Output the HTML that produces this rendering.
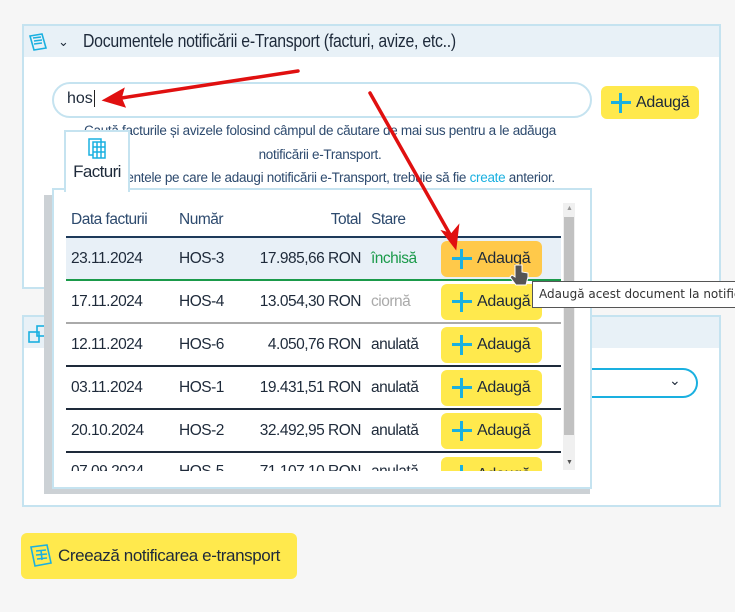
<!DOCTYPE html>
<html><head><meta charset="utf-8"><style>
body{margin:0;width:735px;height:612px;background:#f6f6f6;font-family:"Liberation Sans",sans-serif;color:#1e2a3a;position:relative;overflow:hidden;white-space:nowrap}
.a{position:absolute}
.panel{border:2px solid #c5e3f0;background:#fff}
.hdr{background:#e8f1f7}
.btn{background:#ffe94d;border-radius:6px;font-size:16px;letter-spacing:-0.3px;color:#1e2a3a;display:flex;align-items:center}
.plus{display:inline-block;position:relative;width:20px;height:20px;margin:0 5px 0 12px}
.plus:before,.plus:after{content:"";position:absolute;background:#1ab0e0}
.plus:before{left:8px;top:0;width:3px;height:20px}
.plus:after{left:0;top:8px;width:20px;height:3px}
.help{font-size:13.5px;letter-spacing:-0.3px;color:#2d4a6e;text-align:center}
table{table-layout:fixed}
td{padding:0;font-size:15.5px;letter-spacing:-0.5px;overflow:hidden}
</style></head><body>
<div class="a panel" style="left:22px;top:24px;width:695px;height:261px"></div>
<div class="a hdr" style="left:24px;top:26px;width:695px;height:31px"></div>
<svg class="a" style="left:27px;top:32px" width="24" height="20" viewBox="0 0 24 20"><g fill="none" stroke="#1ab0e0" stroke-width="1.6"><path d="M3 4l12-2 4 14-12 2z"/><path d="M6 6l8-1M7 9l8-1M7 12l8-1"/></g></svg>
<div class="a" style="left:58px;top:34px;font-size:13px">&#8964;</div>
<div class="a" style="left:83px;top:31px;font-size:18px;letter-spacing:-0.3px;transform:scaleX(0.88);transform-origin:0 0">Documentele notificării e-Transport (facturi, avize, etc..)</div>
<div class="a" style="left:52px;top:82px;width:536px;height:32px;border:2px solid #c5e3f0;border-radius:18px;background:#fff"></div>
<div class="a" style="left:67px;top:90px;font-size:16px">hos<span style="border-left:1px solid #222;margin-left:1px"></span></div>
<div class="a btn" style="left:601px;top:86px;width:98px;height:33px"><span class="plus" style="margin-left:10px"></span>Adaugă</div>
<div class="a help" style="left:40px;top:119px;width:560px;line-height:23.5px">Caută facturile și avizele folosind câmpul de căutare de mai sus pentru a le adăuga<br>notificării e-Transport.<br>Documentele pe care le adaugi notificării e-Transport, trebuie să fie <span style="color:#1ab0e0">create</span> anterior.</div>

<div class="a panel" style="left:22px;top:315px;width:695px;height:188px"></div>
<div class="a hdr" style="left:24px;top:317px;width:695px;height:31px"></div>
<svg class="a" style="left:28px;top:324px" width="22" height="20"><g fill="none" stroke="#1ab0e0" stroke-width="1.6"><rect x="1" y="8" width="10" height="10"/><rect x="9" y="2" width="10" height="10"/></g></svg>
<div class="a" style="left:540px;top:368px;width:156px;height:26px;border:2px solid #1ab0e0;border-left:none;border-radius:0 16px 16px 0;background:#fff"></div>
<div class="a" style="left:669px;top:372px;font-size:14px">&#8964;</div>
<div class="a" style="left:46px;top:368px;width:8px;height:37px;background:#e8d84a;border-radius:4px 0 0 4px"></div>

<div class="a" style="left:44px;top:195px;width:546px;height:299px;background:#ccd1d5"></div>
<div class="a" style="left:52px;top:188px;width:536px;height:297px;background:#fff;border:2px solid #c5e3f0"></div>
<div class="a" style="left:64px;top:130px;width:62px;height:60px;background:#fff;border:2px solid #c5e3f0;border-bottom:none;text-align:center">
<svg width="22" height="22" style="margin-top:5px"><g fill="none" stroke="#1ab0e0" stroke-width="1.5"><rect x="3" y="2" width="12" height="16"/><rect x="7" y="5" width="12" height="16" fill="#fff"/><path d="M7 10h12M7 15h12M11 5v16M15 5v16"/></g></svg>
<div style="font-size:17px;letter-spacing:-0.6px;margin-top:-2px">Facturi</div></div>
<div class="a" style="left:66px;top:203px;width:495px;height:268px;overflow:hidden">
<table style="border-collapse:collapse;width:495px">
<colgroup><col style="width:113px"><col style="width:70px"><col style="width:112px"><col style="width:80px"><col></colgroup>
<tr style="height:34px;color:#2d4a6e"><td style="padding-left:5px">Data facturii</td><td>Număr</td><td style="text-align:right">Total</td><td style="padding-left:10px">Stare</td><td></td></tr>
<tr style="height:43px;background:#e8f0f7;border-top:2px solid #1e3a5a;border-bottom:2px solid #1a9a4a"><td style="padding-left:5px">23.11.2024</td><td>HOS-3</td><td style="text-align:right">17.985,66 RON</td><td style="padding-left:10px;color:#1a9a4a">închisă</td><td><div class="btn" style="width:101px;height:36px;background:#ffc94a"><span class="plus" style="margin-left:11px"></span>Adaugă</div></td></tr>
<tr style="height:43px;border-bottom:2px solid #aaa"><td style="padding-left:5px">17.11.2024</td><td>HOS-4</td><td style="text-align:right">13.054,30 RON</td><td style="padding-left:10px;color:#aaa">ciornă</td><td><div class="btn" style="width:101px;height:36px"><span class="plus" style="margin-left:11px"></span>Adaugă</div></td></tr>
<tr style="height:43px;border-bottom:2px solid #1e2a3a"><td style="padding-left:5px">12.11.2024</td><td>HOS-6</td><td style="text-align:right">4.050,76 RON</td><td style="padding-left:10px">anulată</td><td><div class="btn" style="width:101px;height:36px"><span class="plus" style="margin-left:11px"></span>Adaugă</div></td></tr>
<tr style="height:43px;border-bottom:2px solid #1e2a3a"><td style="padding-left:5px">03.11.2024</td><td>HOS-1</td><td style="text-align:right">19.431,51 RON</td><td style="padding-left:10px">anulată</td><td><div class="btn" style="width:101px;height:36px"><span class="plus" style="margin-left:11px"></span>Adaugă</div></td></tr>
<tr style="height:43px;border-bottom:2px solid #1e2a3a"><td style="padding-left:5px">20.10.2024</td><td>HOS-2</td><td style="text-align:right">32.492,95 RON</td><td style="padding-left:10px">anulată</td><td><div class="btn" style="width:101px;height:36px"><span class="plus" style="margin-left:11px"></span>Adaugă</div></td></tr>
<tr style="height:43px;vertical-align:top"><td style="padding-left:5px;padding-top:10px">07.09.2024</td><td style="padding-top:10px">HOS-5</td><td style="text-align:right;padding-top:10px">71.107,10 RON</td><td style="padding-left:10px;padding-top:10px">anulată</td><td style="padding-top:4px"><div class="btn" style="width:101px;height:36px"><span class="plus" style="margin-left:11px"></span>Adaugă</div></td></tr>
</table></div>
<div class="a" style="left:563px;top:203px;width:12px;height:267px;background:#f0f0f0"></div>
<div class="a" style="left:564px;top:217px;width:10px;height:218px;background:#c1c1c1"></div>
<div class="a" style="left:566px;top:205px;font-size:7px;color:#999">▲</div>
<div class="a" style="left:566px;top:459px;font-size:7px;color:#555">▼</div>
<div class="a" style="left:532px;top:281px;width:210px;height:25px;background:#fff;border:1px solid #555;font-family:'DejaVu Sans',sans-serif;font-size:12px;line-height:25px;padding-left:6px;color:#333">Adaugă acest document la notificare</div>
<svg class="a" style="left:508px;top:263px" width="24" height="26"><path d="M7 2v12l-3-2-2 2 6 8h10l2-8v-4l-6-1V2z" fill="#555" stroke="#fff" stroke-width="1"/></svg>

<div class="a btn" style="left:21px;top:533px;width:276px;height:46px;font-size:17px;letter-spacing:-0.4px">
<svg width="26" height="26" style="margin:0 4px 0 7px"><g fill="none" stroke="#1ab0e0" stroke-width="1.6"><path d="M3 4l16-2 4 18-16 3z"/><path d="M8 8l10-1M8 12l11-1M9 16l10-1M13 7l1 10"/></g></svg>Creează notificarea e-transport</div>

<svg class="a" style="left:0;top:0" width="735" height="612"><g stroke="#e01010" stroke-width="3.5" fill="#e01010" stroke-linecap="round">
<line x1="298" y1="71" x2="115" y2="99"/><path d="M106 100l16-9-2 7 3 7z"/>
<line x1="370" y1="93" x2="452" y2="238"/><path d="M455 246l-10-13 7 2 5-6z"/></g></svg>
</body></html>
